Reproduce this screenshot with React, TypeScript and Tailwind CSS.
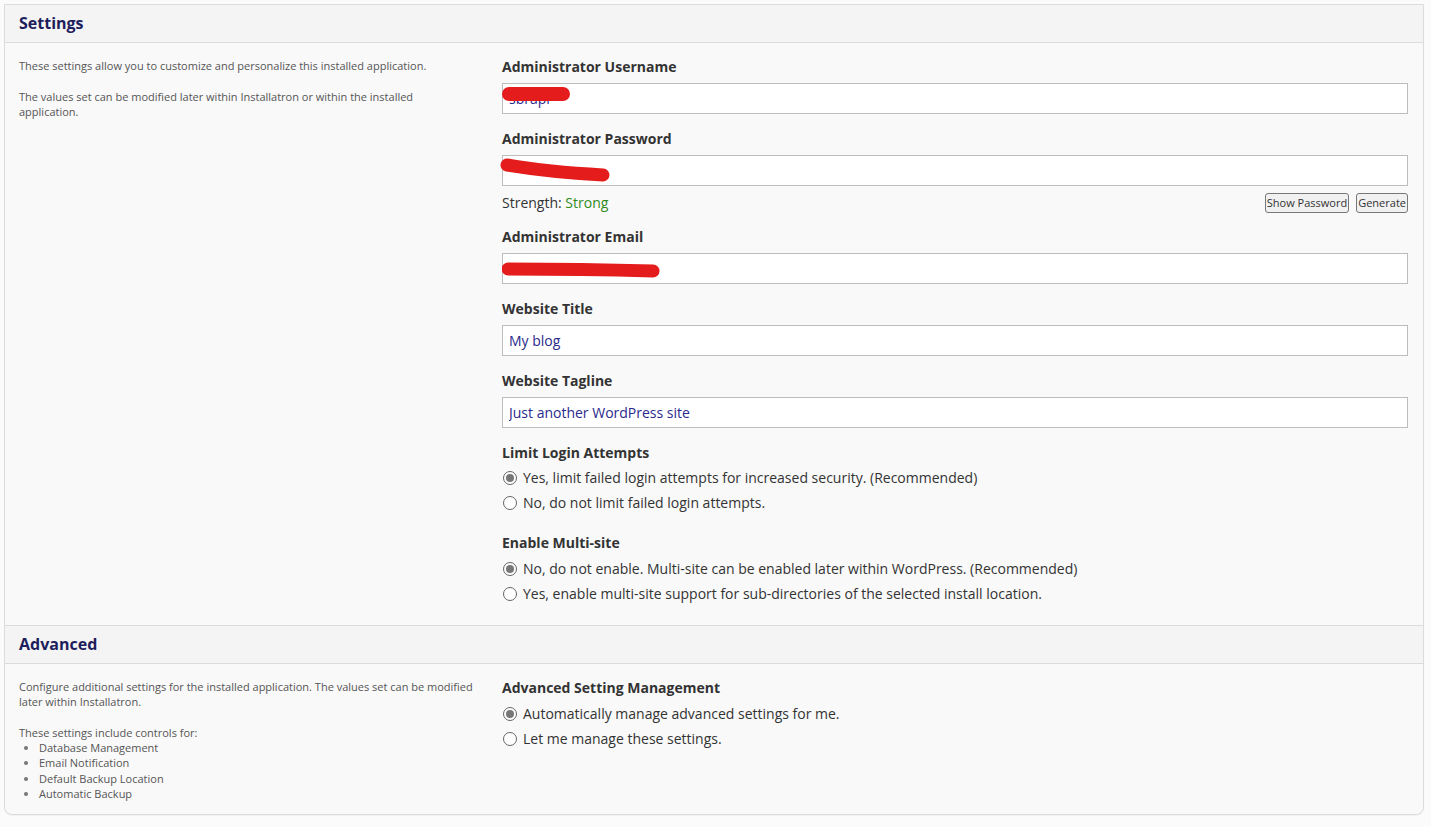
import React from "react";

const font = { fontFamily: '"Open Sans", "Noto Sans", Arial, sans-serif' };

function Field({
  label,
  value,
  mark,
}: {
  label: string;
  value?: string;
  mark?: React.ReactNode;
}) {
  return (
    <div className="mb-[15px]">
      <div className="h-[20px] leading-[20px] text-[14px] font-bold text-[#333]">{label}</div>
      <div className="relative mt-[6px]">
        <input
          readOnly
          value={value ?? ""}
          className="block w-full h-[31px] border border-[#bdbdbd] bg-white pl-[6px] text-[14px] text-[#2a2a8c] outline-none"
          style={font}
        />
        {mark}
      </div>
    </div>
  );
}

function Radio({ checked, children }: { checked?: boolean; children: React.ReactNode }) {
  return (
    <label className="flex items-center h-[25px] text-[14px] text-[#333]">
      <span className="w-[14px] h-[14px] ml-[1px] mr-[6px] rounded-full border border-[#666] bg-white flex items-center justify-center">
        {checked && <span className="w-[8px] h-[8px] rounded-full bg-[#777]" />}
      </span>
      {children}
    </label>
  );
}

function Header({ title }: { title: string }) {
  return (
    <div className="h-[38px] bg-[#f4f4f4] border-b border-[#dcdcdc] pl-[14px] flex items-center">
      <h2 className="text-[16px] font-bold text-[#1e1e5c] -mt-[1px]">{title}</h2>
    </div>
  );
}

export default function App() {
  return (
    <div className="min-h-screen bg-[#fbfbfb] pt-[4px] pl-[4px] pr-[7px] pb-[10px]" style={font}>
      <div className="border border-[#dcdcdc] rounded-b-[8px] bg-[#f9f9f9] shadow-[0_1px_1px_rgba(0,0,0,0.04)]">
        <Header title="Settings" />
        <div className="flex pl-[14px] pr-[15px] pt-[14px] pb-[19px] border-b border-[#dcdcdc]">
          <div className="w-[483px] shrink-0 pt-[1px] text-[11px] leading-[15px] text-[#555] pr-[20px]">
            <p>These settings allow you to customize and personalize this installed application.</p>
            <p className="mt-[16px] pr-[40px]">
              The values set can be modified later within Installatron or within the installed application.
            </p>
          </div>
          <div className="flex-1">
            <Field
              label="Administrator Username"
              value="sbrapi"
              mark={
                <svg className="absolute left-0 top-0 pointer-events-none" width="80" height="30">
                  <path d="M7 11 L61 11" stroke="#e51c1c" strokeWidth="14" strokeLinecap="round" />
                </svg>
              }
            />
            <div className="mb-[7px]">
              <div className="h-[20px] leading-[20px] text-[14px] font-bold text-[#333]">Administrator Password</div>
              <div className="relative mt-[6px]">
                <input
                  readOnly
                  type="password"
                  className="block w-full h-[31px] border border-[#bdbdbd] bg-white pl-[6px] text-[14px] outline-none"
                />
                <svg className="absolute -left-[4px] top-0 pointer-events-none" width="130" height="32">
                  <path d="M9 10 Q 50 17 105 20" stroke="#e51c1c" strokeWidth="13" strokeLinecap="round" fill="none" />
                </svg>
              </div>
            </div>
            <div className="flex items-center justify-between h-[20px] mb-[14px]">
              <span className="text-[14px] text-[#333] -mt-[2px]">
                Strength: <span className="text-[#2f8a1c]">Strong</span>
              </span>
              <div className="flex gap-[7px]">
                <button className="h-[20px] px-px text-[11px] leading-[18px] text-[#333] border border-[#777] rounded-[3px] bg-[#f1f1f1]">
                  Show Password
                </button>
                <button className="h-[20px] px-px text-[11px] leading-[18px] text-[#333] border border-[#777] rounded-[3px] bg-[#f1f1f1]">
                  Generate
                </button>
              </div>
            </div>
            <Field
              label="Administrator Email"
              mark={
                <svg className="absolute left-0 top-0 pointer-events-none" width="170" height="31">
                  <path d="M6 16 Q 80 16 151 18" stroke="#e51c1c" strokeWidth="13" strokeLinecap="round" fill="none" />
                </svg>
              }
            />
            <Field label="Website Title" value="My blog" />
            <Field label="Website Tagline" value="Just another WordPress site" />
            <div className="mb-[18px]">
              <div className="h-[20px] leading-[20px] text-[14px] font-bold text-[#333] mb-[2px]">Limit Login Attempts</div>
              <Radio checked>Yes, limit failed login attempts for increased security. (Recommended)</Radio>
              <Radio>No, do not limit failed login attempts.</Radio>
            </div>
            <div>
              <div className="h-[20px] leading-[20px] text-[14px] font-bold text-[#333] mb-[3px]">Enable Multi-site</div>
              <Radio checked>No, do not enable. Multi-site can be enabled later within WordPress. (Recommended)</Radio>
              <Radio>Yes, enable multi-site support for sub-directories of the selected install location.</Radio>
            </div>
          </div>
        </div>
        <Header title="Advanced" />
        <div className="flex pl-[14px] pr-[15px] pt-[15px] pb-[12px]">
          <div className="w-[483px] shrink-0 text-[11px] leading-[15px] text-[#555] pr-[10px]">
            <p>
              Configure additional settings for the installed application. The values set can be modified later within
              Installatron.
            </p>
            <p className="mt-[16px]">These settings include controls for:</p>
            <ul className="list-disc pl-[20px] marker:text-[#777] leading-[15.4px]">
              <li>Database Management</li>
              <li>Email Notification</li>
              <li>Default Backup Location</li>
              <li>Automatic Backup</li>
            </ul>
          </div>
          <div className="flex-1 -mt-[1px]">
            <div className="h-[20px] leading-[20px] text-[14px] font-bold text-[#333] mb-[3px]">Advanced Setting Management</div>
            <Radio checked>Automatically manage advanced settings for me.</Radio>
            <Radio>Let me manage these settings.</Radio>
          </div>
        </div>
      </div>
    </div>
  );
}
